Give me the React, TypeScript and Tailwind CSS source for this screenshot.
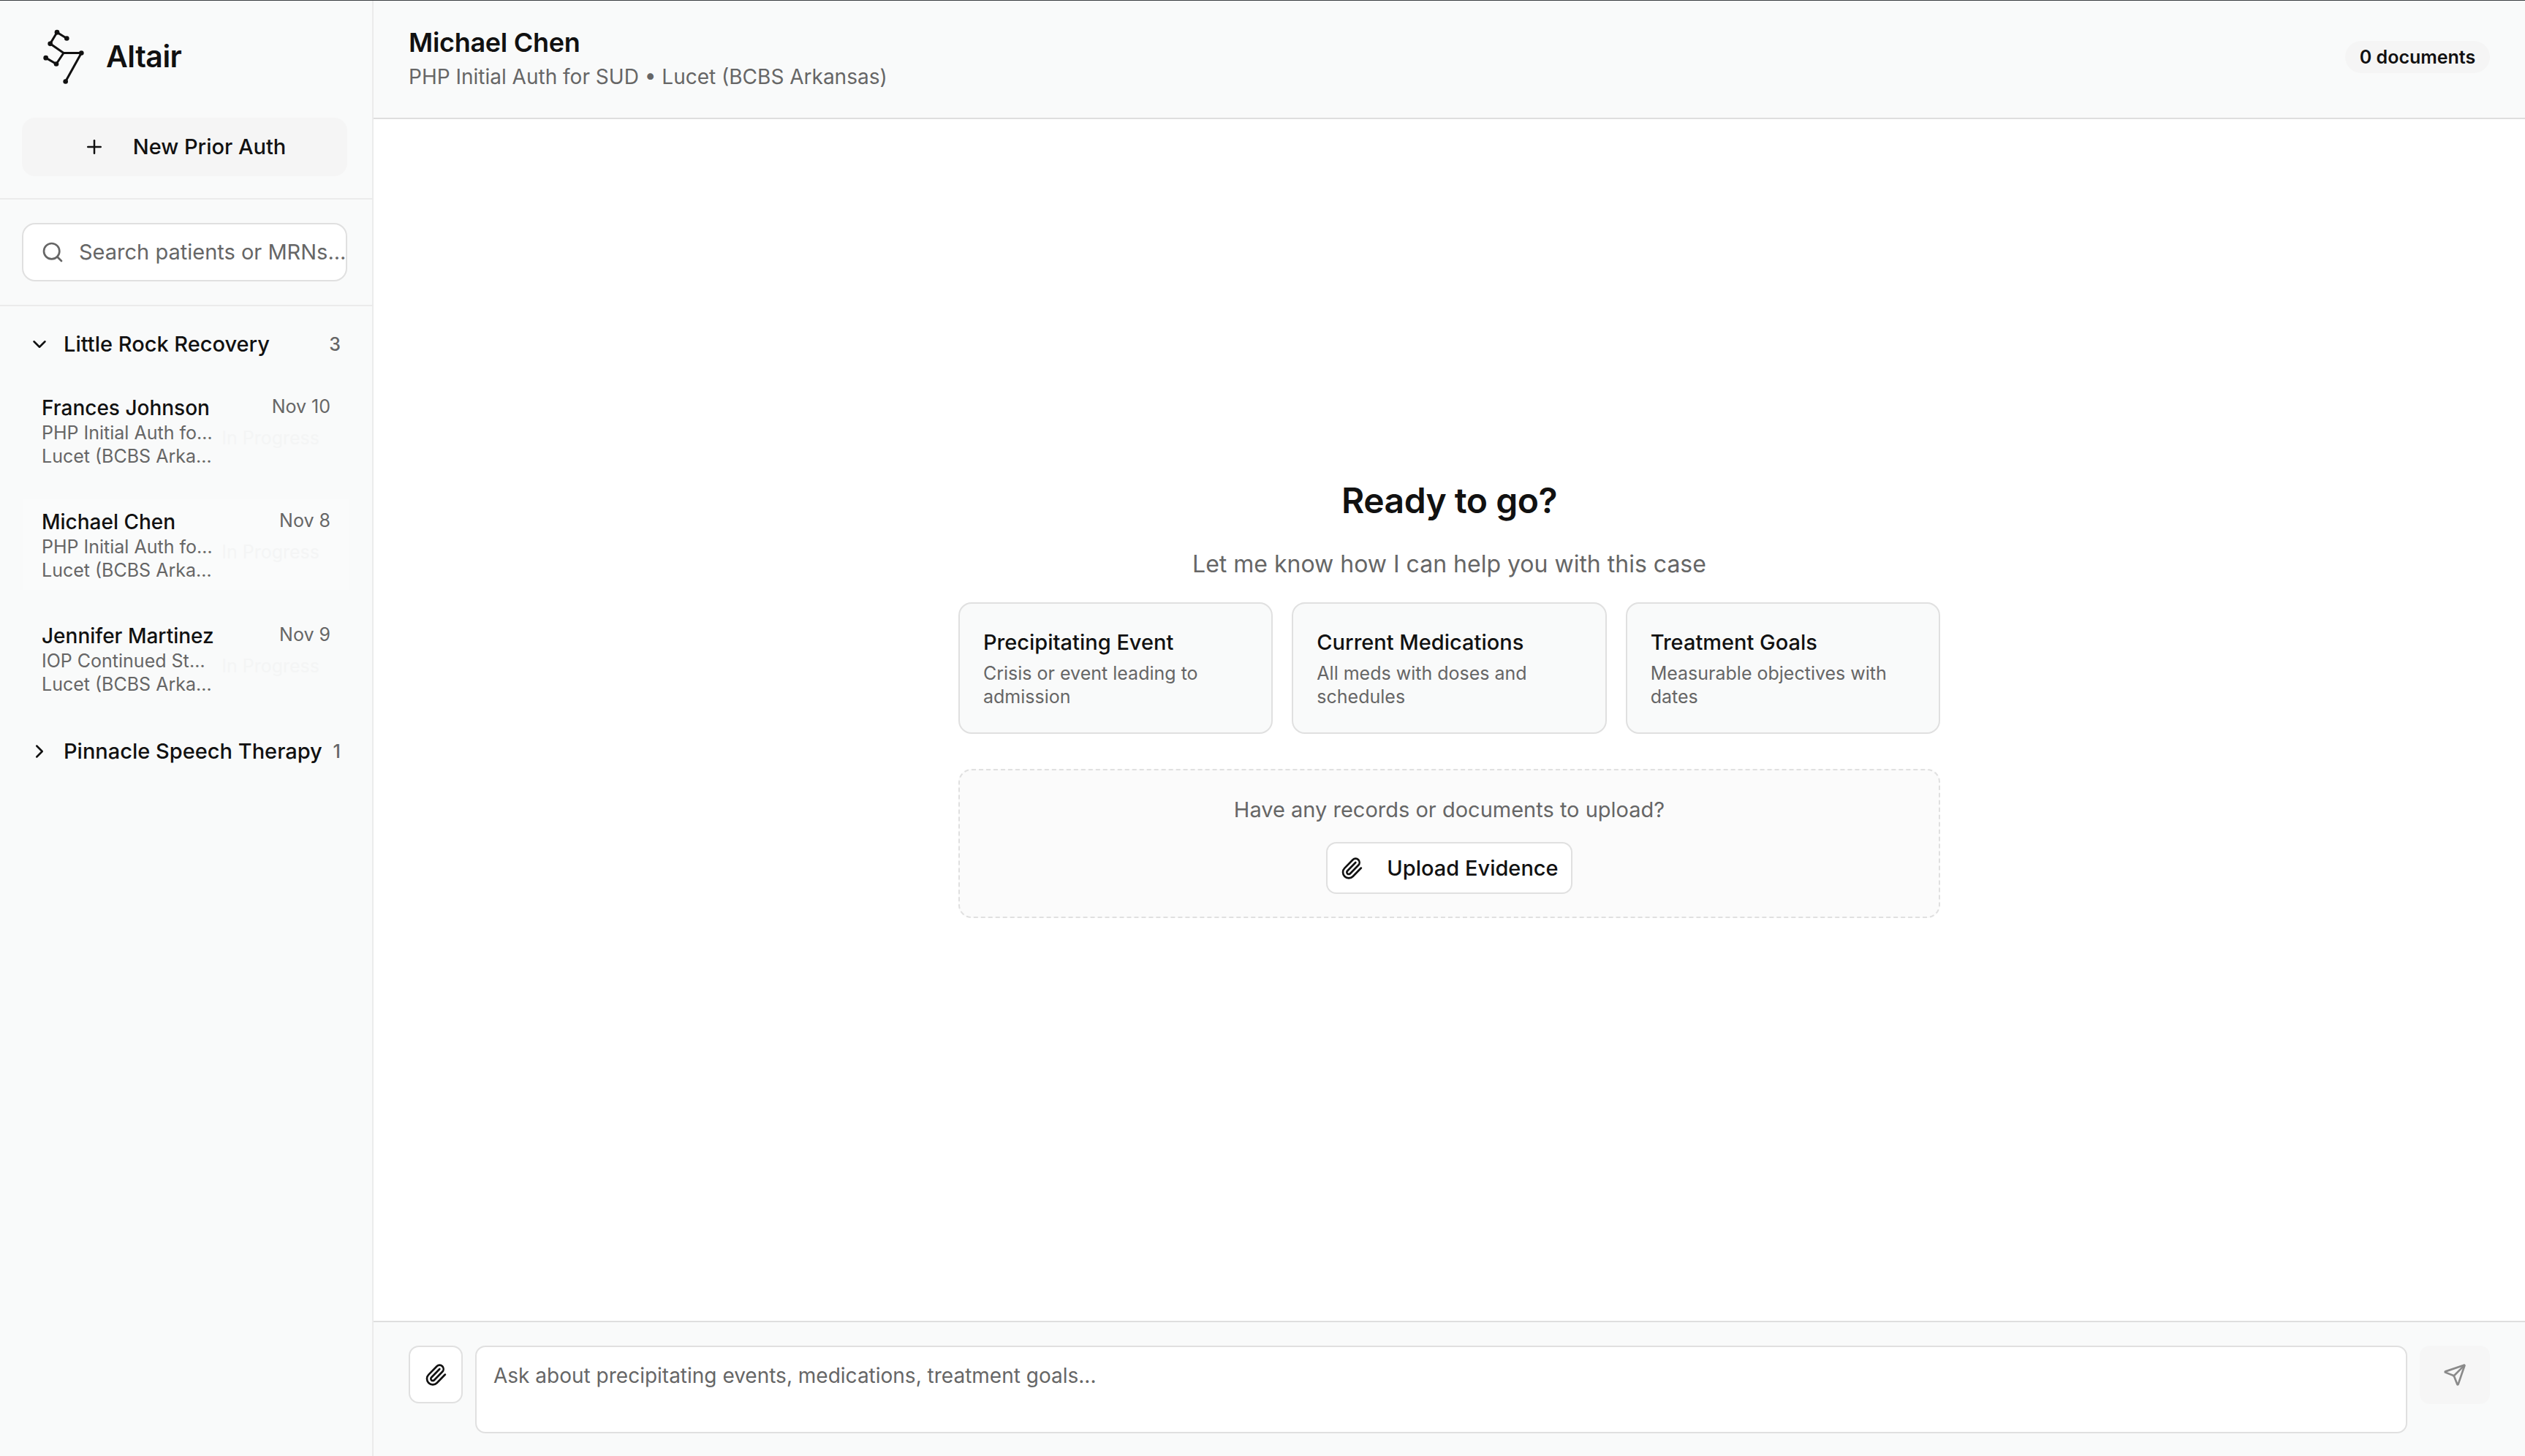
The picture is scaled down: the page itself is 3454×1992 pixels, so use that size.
import { ChevronDown, ChevronRight, Paperclip, Plus, Search, Send } from "lucide-react";

const rows = [
  { name: "Frances Johnson", date: "Nov 10", a: "PHP Initial Auth for SUD", b: "Lucet (BCBS Arkansas)", active: false },
  { name: "Michael Chen", date: "Nov 8", a: "PHP Initial Auth for SUD", b: "Lucet (BCBS Arkansas)", active: true },
  { name: "Jennifer Martinez", date: "Nov 9", a: "IOP Continued Stay Review", b: "Lucet (BCBS Arkansas)", active: false },
];

const cards = [
  { title: "Precipitating Event", desc: "Crisis or event leading to admission" },
  { title: "Current Medications", desc: "All meds with doses and schedules" },
  { title: "Treatment Goals", desc: "Measurable objectives with dates" },
];

function Logo() {
  return (
    <svg viewBox="80 80 180 230" className="w-[60px] h-[77px] shrink-0 text-[#111]" fill="none" stroke="currentColor" strokeWidth="9" strokeLinejoin="round">
      <polyline points="183,120 143,95 115,142 170,180 243,180 178,297" />
      <polyline points="170,180 140,225 97,200" />
      {[[183, 120], [143, 95], [115, 142], [243, 180], [178, 297], [140, 225], [97, 200]].map(([x, y]) => (
        <circle key={`${x}-${y}`} cx={x} cy={y} r="10" fill="currentColor" stroke="none" />
      ))}
    </svg>
  );
}

export default function App() {
  return (
    <div className="w-[3454px] h-[1992px] flex flex-col overflow-hidden bg-white border-t border-[#3c3f42] text-[#111111] font-['Inter','Liberation_Sans',sans-serif]">
      <div className="flex flex-1 min-h-0">
        <aside className="w-[511px] shrink-0 flex flex-col bg-[#f9fafa] border-r-2 border-[#ebebeb]">
          <div className="h-[272px] shrink-0 border-b-2 border-[#ebebeb] px-[30px]">
            <div className="h-[160px] flex items-center gap-[28px] pl-[27px] pb-[8px]">
              <Logo />
              <span className="text-[41px] leading-[50px] font-semibold tracking-[-0.5px]">Altair</span>
            </div>
            <button className="w-[445px] h-[80px] flex items-center justify-center gap-[38px] rounded-[18px] bg-[#f5f5f5] text-[29px] leading-[40px] font-medium">
              <Plus className="w-[30px] h-[30px]" strokeWidth={2} />
              New Prior Auth
            </button>
          </div>
          <div className="h-[146px] shrink-0 border-b-2 border-[#ebebeb] px-[30px] flex items-center">
            <div className="w-[445px] h-[80px] flex items-center gap-[20px] px-[24px] rounded-[18px] border-2 border-[#e0e0e0] bg-white text-[#666666]">
              <Search className="w-[32px] h-[32px] shrink-0" strokeWidth={2} />
              <span className="text-[29px] leading-[40px] whitespace-nowrap">Search patients or MRNs...</span>
            </div>
          </div>
          <div className="flex flex-col pt-[22px]">
            <div className="h-[60px] flex items-center pl-[39px] pr-[43px]">
              <ChevronDown className="w-[30px] h-[30px] shrink-0" strokeWidth={2} />
              <span className="ml-[18px] flex-1 text-[29px] leading-[40px] font-medium">Little Rock Recovery</span>
              <span className="text-[25px] leading-[32px] font-medium text-[#666666]">3</span>
            </div>
            <div className="flex flex-col pt-[26px] gap-[32px]">
              {rows.map((r) => (
                <div key={r.name} className={`relative flex h-[124px] mx-[32px] px-[25px] pt-[13px] ${r.active ? "bg-[#fafbfb]" : ""}`}>
                  <div className="w-[236px] shrink-0 flex flex-col">
                    <div className="text-[28px] leading-[36px] font-medium whitespace-nowrap">{r.name}</div>
                    <div className="text-[25px] leading-[32px] text-[#666666] truncate">{r.a}</div>
                    <div className="text-[25px] leading-[32px] text-[#666666] truncate">{r.b}</div>
                  </div>
                  <div className="flex-1 flex flex-col items-end">
                    <div className="text-[25px] leading-[32px] text-[#666666] whitespace-nowrap">{r.date}</div>
                    <div className="mt-[11px] mr-[15px] text-[25px] leading-[32px] text-[#f4f5f5] whitespace-nowrap">In Progress</div>
                  </div>
                </div>
              ))}
            </div>
            <div className="mt-[35px] h-[60px] flex items-center pl-[39px] pr-[43px]">
              <ChevronRight className="w-[30px] h-[30px] shrink-0" strokeWidth={2} />
              <span className="ml-[18px] flex-1 text-[29px] leading-[40px] font-medium">Pinnacle Speech Therapy</span>
              <span className="text-[25px] leading-[32px] font-medium text-[#666666]">1</span>
            </div>
          </div>
        </aside>

        <main className="flex-1 min-w-0 flex flex-col">
          <header className="h-[162px] shrink-0 flex items-center justify-between bg-[#f9fafa] border-b-2 border-[#dedede] pl-[48px] pr-[48px]">
            <div className="flex flex-col">
              <div className="text-[36px] leading-[48px] font-semibold tracking-[-0.3px]">Michael Chen</div>
              <div className="text-[28px] leading-[46px] text-[#666666]">PHP Initial Auth for SUD • Lucet (BCBS Arkansas)</div>
            </div>
            <div className="h-[44px] w-[198px] rounded-full bg-[#f5f5f5] flex items-center justify-center text-[25px] leading-[32px] font-semibold mb-[6px]">
              0 documents
            </div>
          </header>

          <section className="flex-1 min-h-0 flex flex-col items-center justify-center pb-[58px]">
            <h1 className="text-[48px] leading-[58px] font-semibold tracking-[-0.5px]">Ready to go?</h1>
            <p className="mt-[36px] text-[32px] leading-[44px] text-[#666666]">Let me know how I can help you with this case</p>
            <div className="mt-[30px] w-[1343px] grid grid-cols-3 gap-[26px]">
              {cards.map((c) => (
                <div key={c.title} className="h-[180px] rounded-[18px] border-2 border-[#e0e0e0] bg-[#f9fafa] px-[32px] pt-[34px]">
                  <div className="text-[29px] leading-[38px] font-medium">{c.title}</div>
                  <div className="mt-[7px] text-[25px] leading-[32px] text-[#666666]">{c.desc}</div>
                </div>
              ))}
            </div>
            <div className="mt-[48px] w-[1343px] h-[204px] rounded-[18px] border-2 border-dashed border-[#e0e0e0] bg-[#fbfbfb] flex flex-col items-center pt-[35px]">
              <div className="text-[29px] leading-[38px] text-[#666666]">Have any records or documents to upload?</div>
              <button className="mt-[25px] w-[337px] h-[71px] rounded-[14px] border-2 border-[#e0e0e0] bg-white flex items-center justify-center gap-[32px] text-[29px] leading-[38px] font-medium">
                <Paperclip className="w-[32px] h-[32px]" strokeWidth={2} />
                Upload Evidence
              </button>
            </div>
          </section>

          <footer className="h-[185px] shrink-0 flex items-start bg-[#f9fafa] border-t-2 border-[#dedede] pt-[32px] pl-[48px] pr-[48px]">
            <button className="w-[74px] h-[79px] shrink-0 rounded-[14px] border-2 border-[#e0e0e0] bg-white flex items-center justify-center">
              <Paperclip className="w-[32px] h-[32px]" strokeWidth={2} />
            </button>
            <div className="ml-[17px] flex-1 h-[120px] rounded-[14px] border-2 border-[#e0e0e0] bg-white px-[23px] pt-[19px] text-[28px] leading-[40px] text-[#666666]">
              Ask about precipitating events, medications, treatment goals...
            </div>
            <button className="ml-[17px] w-[96px] h-[80px] shrink-0 rounded-[14px] bg-[#f6f6f6] flex items-center justify-center text-[#8a8a8a]">
              <Send className="w-[32px] h-[32px]" strokeWidth={2} />
            </button>
          </footer>
        </main>
      </div>
    </div>
  );
}
